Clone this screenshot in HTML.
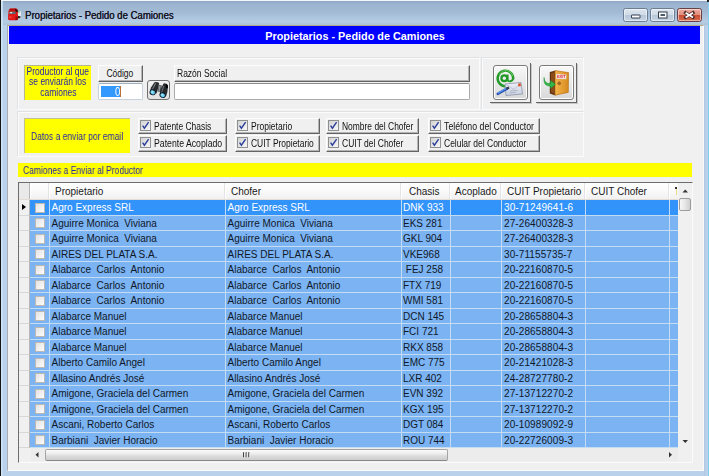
<!DOCTYPE html><html><head><meta charset="utf-8"><style>
*{margin:0;padding:0;box-sizing:border-box}
html,body{width:709px;height:476px;overflow:hidden;background:#b9d1ea;font-family:"Liberation Sans",sans-serif}
.a{position:absolute}
.t{white-space:pre;position:absolute;line-height:1}
#frame{left:0;top:0;width:709px;height:476px;background:#b9d1ea}
#tb{left:0;top:0;width:709px;height:25px;background:linear-gradient(#8fa7c6 1px,#9db4d0 4px,#a3bad5 12px,#b6cde6 22px,#b0c4d8 24px)}
#blk{left:0;top:0;width:1px;height:476px;background:#151515}
#top{left:0;top:0;width:709px;height:1px;background:#f4f6f8}
#client{left:7px;top:25px;width:697px;height:446px;background:#f0f0f0;border-left:1px solid #a7acb0;border-top:1px solid #aea688;border-right:1px solid #fafafa;border-bottom:1px solid #fafafa}
#bluebar{left:9px;top:26px;width:691px;height:18px;background:#0000fe}
.grp{border-top:1px solid #dfe3e6;border-left:1px solid #dfe3e6;box-shadow:inset 1px 1px 0 #fbfbfb, 1px 1px 0 #fbfbfb}
.yl{background:#ffff00;color:#2626a8}
.gs{will-change:transform}
.raised{background:#f0f0f0;border-top:1px solid #fdfdfd;border-left:1px solid #fdfdfd;border-right:1px solid #646464;border-bottom:1px solid #646464;box-shadow:inset -1px -1px 0 #b4b4b4}
.cb{width:11px;height:11px;border:1px solid #8f8f8f;background:linear-gradient(135deg,#dcdcdc,#f6f6f6)}
.cbi{width:11px;height:11px;border:1px solid #9a9a9a;background:linear-gradient(135deg,#d8d8d8,#f8f8f8)}
.lbl{font-size:10px;color:#1e1e1e}
.n{position:absolute;white-space:pre;line-height:1;font-size:10px;transform:scaleX(0.85);transform-origin:0 0}
.nc{position:absolute;white-space:pre;line-height:1;font-size:10px;text-align:center}
.nc span{display:inline-block;transform:scaleX(0.85);transform-origin:50% 0}
.g{font-size:10px}
.row{left:19px;width:659px;height:15.5px}
.cell{position:absolute;top:0;height:15px;font-size:10px;line-height:15px;white-space:pre;overflow:hidden;padding-left:3px}
</style></head><body>
<div id="frame" class="a"></div><div id="tb" class="a"></div><div id="top" class="a"></div><div id="blk" class="a"></div><div class="a" style="left:1px;top:1px;width:2px;height:475px;background:linear-gradient(90deg,#d2e6f8,#c2d9ef)"></div><div class="a" style="left:708px;top:2px;width:1px;height:474px;background:#86cdf0"></div><div class="a" style="left:707px;top:0;width:2px;height:2px;background:#202020"></div><div class="a" style="left:704px;top:25px;width:1px;height:451px;background:#b0c8e4"></div>
<svg class="a" style="left:6px;top:6px;overflow:visible" width="18" height="17" viewBox="6 6 18 17">
<path d="M17.3 10.2 L20.8 11.2 L21 18.8 L17.5 19.6 Z" fill="#eef2ee"/>
<path d="M17.5 10.3 L19.8 10.8 L19.6 13 L17.5 12.6Z" fill="#8ab89a"/>
<path d="M17.4 15.8 L20.6 16.2 L20.4 18.2 L17.6 18.4Z" fill="#2a2a2a"/>
<path d="M10 8.6 L16.2 8.4 Q17.8 8.8 17.8 10.5 L17.9 19.6 L16 20.3 L9.2 20.3 Q8.2 19.8 8.2 18.3 L8.4 12 Q8.6 9.4 10 8.6Z" fill="#d41414"/>
<path d="M10.2 8.7 L16 8.5 L17.4 10 L9.3 10.4Z" fill="#b00c0c"/>
<path d="M15 9 L17.6 10 L17.6 12 L15.5 11.5Z" fill="#2a0606"/>
<path d="M9.2 11.8 L15.6 11.5 L15.8 14 L9 14.2Z" fill="#5e6666"/>
<path d="M9.7 12.2 L12.4 12.1 L12.2 13.2 L9.7 13.3Z" fill="#e4ecec"/>
<path d="M8.4 14.6 L17.6 14.3 L17.8 19.6 L8.4 19.8Z" fill="#e41a1a"/>
<path d="M15.4 16.5 L17.8 16.5 L17.8 20 L15.6 20.2Z" fill="#9a0a0a"/>
<path d="M9.2 17.2 L11.5 17" stroke="#ff7070" stroke-width="0.8"/>
</svg>
<div class="t" style="left:25px;top:10.5px;font-size:10.2px;color:#151525;transform:scaleX(0.94);transform-origin:0 0;text-shadow:0.3px 0 0 currentColor">Propietarios - Pedido de Camiones</div>
<div class="a" style="left:623px;top:8px;width:25px;height:14px;border:1px solid #6e7e92;border-radius:2.5px;background:linear-gradient(#dde6ef 0%,#cfdbe7 48%,#b7c7d8 52%,#c5d5e5 100%);box-shadow:inset 0 0 0 1px rgba(255,255,255,0.5)"></div><svg class="a" style="left:628px;top:11px;overflow:visible" width="16" height="10" viewBox="628 11 16 10">
<rect x="631.5" y="15" width="8.5" height="3" rx="0.3" fill="#fff" stroke="#2f3a4a" stroke-width="1"/></svg>
<div class="a" style="left:650px;top:8px;width:25px;height:14px;border:1px solid #6e7e92;border-radius:2.5px;background:linear-gradient(#dde6ef 0%,#cfdbe7 48%,#b7c7d8 52%,#c5d5e5 100%);box-shadow:inset 0 0 0 1px rgba(255,255,255,0.5)"></div><svg class="a" style="left:655px;top:10px;overflow:visible" width="16" height="10" viewBox="655 10 16 10">
<rect x="658.5" y="12" width="8.5" height="6" fill="#fff" stroke="#2f3a4a" stroke-width="1"/>
<rect x="660.5" y="14" width="4.5" height="2" fill="#4a5a6a"/></svg>
<div class="a" style="left:677px;top:8px;width:25px;height:14px;border:1px solid #6a4048;border-radius:2.5px;background:linear-gradient(#eeaa9c 0%,#e1907e 48%,#c84f36 52%,#d66a4c 100%);box-shadow:inset 0 0 0 1px rgba(255,255,255,0.5)"></div><svg class="a" style="left:682px;top:10px;overflow:visible" width="16" height="10" viewBox="682 10 16 10">
<path d="M685.6 12.8 L693 17.4 M693 12.8 L685.6 17.4" stroke="#4a2a28" stroke-width="3.2" stroke-linecap="square"/>
<path d="M685.6 12.8 L693 17.4 M693 12.8 L685.6 17.4" stroke="#fff" stroke-width="1.8" stroke-linecap="butt"/></svg>
<div id="client" class="a"></div>
<div id="bluebar" class="a"></div>
<div class="t" style="left:0;top:31px;width:709px;text-align:center;font-size:10.85px;font-weight:bold;color:#fff;padding-left:1px">Propietarios - Pedido de Camiones</div>
<div class="a grp" style="left:17px;top:57px;width:462px;height:52px"></div>
<div class="a grp" style="left:481px;top:57px;width:102px;height:52px"></div>
<div class="a grp" style="left:17px;top:111px;width:566px;height:45px"></div>
<div class="a yl" style="left:24px;top:65px;width:67px;height:35px;border-top:1px solid #b8b890;border-left:1px solid #b8b890"></div>
<div class="nc gs" style="left:8px;top:66.8px;width:100px;color:#2626a8"><span>Productor al que</span></div>
<div class="nc gs" style="left:8px;top:77.39999999999999px;width:100px;color:#2626a8"><span>se enviarán los</span></div>
<div class="nc gs" style="left:8px;top:88.0px;width:100px;color:#2626a8"><span>camiones</span></div>
<div class="a raised" style="left:98px;top:65px;width:45px;height:17px;border-bottom-width:1px"></div>
<div class="nc" style="left:98px;top:69px;width:44px;color:#111"><span>Código</span></div>
<div class="a" style="left:98px;top:83px;width:45px;height:17px;background:#fff;border:1px solid #c5d2de;border-top-color:#9fb0c0;border-radius:2px"></div>
<div class="a" style="left:101px;top:86px;width:20px;height:11px;background:#3399ff"></div>
<div class="t" style="left:114.5px;top:85.5px;font-size:12px;color:#fff;transform:scaleX(0.8);transform-origin:0 0">0</div>
<div class="a" style="left:120px;top:86px;width:1px;height:11px;background:#c07030"></div>
<div class="a" style="left:147px;top:80px;width:23px;height:20px;border:1px solid #707070;border-radius:3px;background:linear-gradient(#f2f2f2,#e2e2e2)"></div>
<svg class="a" style="left:147px;top:80px;overflow:visible" width="24" height="20" viewBox="147 80 24 20">
<path d="M154.5 82.2 Q157 81.5 159.2 83 L157.8 89.5 L156.5 93.5 L149.8 91.5 L151 87.5Z" fill="#262a2d"/>
<path d="M155 83.3 L156.3 83.2 L152.4 90.2 L151.6 90Z" fill="#80878b"/>
<path d="M158.6 84.8 L162 85.5 L161 92 L157.5 91.5Z" fill="#555a5e"/>
<path d="M159.2 86 L160.6 86 L159.6 91 L158.6 91Z" fill="#9aa0a4"/>
<path d="M163.6 83.4 Q166.5 83 168 85.2 L167.4 92 L166 96.5 L159.5 94.5 L160.5 89.5Z" fill="#262a2d"/>
<path d="M166 84 L168 85.5 L167.8 88.5 L165.6 87.5Z" fill="#000"/>
<path d="M163.3 86 L164.4 86 L161.8 93 L161 92.8Z" fill="#6d7478"/>
<ellipse cx="152.7" cy="92.3" rx="3.2" ry="2.9" fill="#101c28" transform="rotate(20 152.7 92.3)"/>
<ellipse cx="152.7" cy="92.4" rx="2.3" ry="1.9" fill="#6ad0f2" transform="rotate(20 152.7 92.4)"/>
<ellipse cx="152.1" cy="92" rx="0.9" ry="0.7" fill="#c0f0ff"/>
<ellipse cx="162.7" cy="95.1" rx="3.2" ry="2.8" fill="#101c28" transform="rotate(20 162.7 95.1)"/>
<ellipse cx="162.7" cy="95.2" rx="2.3" ry="1.8" fill="#6ad0f2" transform="rotate(20 162.7 95.2)"/>
<ellipse cx="162.1" cy="94.8" rx="0.9" ry="0.7" fill="#c0f0ff"/>
</svg>
<div class="a raised" style="left:174px;top:65px;width:296px;height:17px;border-bottom-width:1px"></div>
<div class="n" style="left:177px;top:69px;color:#111">Razón Social</div>
<div class="a" style="left:174px;top:83px;width:296px;height:17px;background:#fff;border:1px solid #ababab;border-top-color:#8d8d8d;border-radius:2px"></div>
<div class="a" style="left:490px;top:63px;width:41px;height:40px;border-right:1px solid #646464;border-bottom:1px solid #646464;box-shadow:1px 1px 0 #c8c8c8"></div>
<div class="a" style="left:493px;top:65px;width:35px;height:35px;border:1px solid #7a7a7a;border-radius:3px;background:linear-gradient(#f8f8f8,#e6e6e6 60%,#d8d8d8);box-shadow:inset 0 0 0 1px #fff"></div>
<div class="a" style="left:536px;top:63px;width:41px;height:40px;border-right:1px solid #646464;border-bottom:1px solid #646464;box-shadow:1px 1px 0 #c8c8c8"></div>
<div class="a" style="left:539px;top:65px;width:35px;height:35px;border:1px solid #7a7a7a;border-radius:3px;background:linear-gradient(#f8f8f8,#e6e6e6 60%,#d8d8d8);box-shadow:inset 0 0 0 1px #fff"></div>
<svg class="a" style="left:493px;top:66px;overflow:visible" width="34" height="34" viewBox="493 66 34 34">
<defs><linearGradient id="env" x1="0" y1="0" x2="0" y2="1"><stop offset="0" stop-color="#eef0f8"/><stop offset="1" stop-color="#c8cede"/></linearGradient>
<linearGradient id="grn" x1="0" y1="0" x2="1" y2="1"><stop offset="0" stop-color="#7ad86a"/><stop offset="0.5" stop-color="#2aa02a"/><stop offset="1" stop-color="#107a18"/></linearGradient>
<linearGradient id="door" x1="0" y1="0" x2="1" y2="0"><stop offset="0" stop-color="#f4b64a"/><stop offset="1" stop-color="#d88a1e"/></linearGradient></defs>
<path d="M513.2 79.2 A7.8 7.8 0 1 0 510.2 84.6" fill="none" stroke="#239a28" stroke-width="2.4"/>
<path d="M512.6 76 A7 7 0 0 0 499.5 74.5" fill="none" stroke="#8ae07a" stroke-width="0.7"/>
<circle cx="504.3" cy="78.3" r="2.9" fill="none" stroke="#239a28" stroke-width="2.3"/>
<path d="M507.6 74.6 L507.6 79.6 Q508 81.6 510.2 81.3 Q512.8 80.8 513.2 78.5" fill="none" stroke="#239a28" stroke-width="1.9"/>
<path d="M505 84 L521 82.5 L522.5 94 L506 95.5Z" fill="url(#env)" stroke="#8c94ac" stroke-width="0.8"/>
<path d="M506 84.5 L514 89.5 L521 83" fill="none" stroke="#a8b0c4" stroke-width="0.6"/>
<path d="M510 91 L518 90.3 M509.5 92.8 L516 92.3" stroke="#9aa2b4" stroke-width="0.6"/>
<rect x="518.2" y="83.5" width="2.6" height="2.8" fill="#d8502a"/>
<path d="M497.8 93.8 L507 88.6" stroke="#2a4fb0" stroke-width="2.6" stroke-linecap="round"/>
<path d="M498.3 93 L506.5 88.2" stroke="#5a9cf0" stroke-width="1.2" stroke-linecap="round"/>
<path d="M506.5 88.7 L509 87.4" stroke="#303848" stroke-width="2.2"/>
</svg>
<svg class="a" style="left:540px;top:66px;overflow:visible" width="34" height="34" viewBox="540 66 34 34">
<path d="M549.8 72 L555.5 70.5 L555.5 95.5 L549.8 93.5Z" fill="#5e3210"/>
<path d="M551 73 L554.5 72.2 L554.5 93.5 L551 92.5Z" fill="#8a4c18"/>
<path d="M555 70.5 L568.6 72.6 L568.3 92.4 L555 95.2Z" fill="url(#door)" stroke="#b06a14" stroke-width="0.6"/>
<path d="M556 73.7 L566.6 74.6 L566.4 79.2 L556 79Z" fill="#f6f2ea" stroke="#c89040" stroke-width="0.4"/>
<text x="561.3" y="78.3" font-size="4.2" font-weight="bold" fill="#e0203a" text-anchor="middle" font-family="Liberation Sans" letter-spacing="-0.2">EXIT</text>
<circle cx="559.2" cy="83.3" r="1.5" fill="#a86a28" stroke="#7a4a18" stroke-width="0.4"/>
<path d="M544 77.5 Q544.5 84 550.5 83.5 L550.5 80.5 L555.5 84.2 L550.5 88.5 L550.5 86 Q543 86.5 544 77.5Z" fill="#30b848" stroke="#1a8a30" stroke-width="0.5"/>
</svg>
<div class="a yl" style="left:24px;top:118px;width:106px;height:35px;border-top:1px solid #c0c090;border-left:1px solid #c0c090"></div>
<div class="n gs" style="left:31px;top:131.5px;color:#2626a8">Datos a enviar por email</div>
<svg width="0" height="0" style="position:absolute"><defs><linearGradient id="cg" x1="0" y1="0" x2="1" y2="1"><stop offset="0" stop-color="#d0d0d0"/><stop offset="1" stop-color="#fafafa"/></linearGradient><linearGradient id="cg2" x1="0" y1="0" x2="1" y2="1"><stop offset="0" stop-color="#cfcfcf"/><stop offset="1" stop-color="#fbfbfb"/></linearGradient></defs></svg>
<div class="a raised" style="left:138px;top:118px;width:89px;height:16px"></div>
<svg class="a" style="left:140px;top:120px" width="11" height="11" viewBox="0 0 11 11"><rect x="0.5" y="0.5" width="10" height="10" fill="url(#cg)" stroke="#8e8f8f"/><path d="M2.6 5.6 L4.4 8.2 L8.6 2.2" fill="none" stroke="#2b3e9a" stroke-width="1.4"/></svg>
<div class="n" style="left:154px;top:121.5px;color:#111;transform:scaleX(0.845)">Patente Chasis</div>
<div class="a raised" style="left:138px;top:135px;width:89px;height:17px"></div>
<svg class="a" style="left:140px;top:137px" width="11" height="11" viewBox="0 0 11 11"><rect x="0.5" y="0.5" width="10" height="10" fill="url(#cg)" stroke="#8e8f8f"/><path d="M2.6 5.6 L4.4 8.2 L8.6 2.2" fill="none" stroke="#2b3e9a" stroke-width="1.4"/></svg>
<div class="n" style="left:154px;top:138.5px;color:#111;transform:scaleX(0.87)">Patente Acoplado</div>
<div class="a raised" style="left:235px;top:118px;width:85px;height:16px"></div>
<svg class="a" style="left:237px;top:120px" width="11" height="11" viewBox="0 0 11 11"><rect x="0.5" y="0.5" width="10" height="10" fill="url(#cg)" stroke="#8e8f8f"/><path d="M2.6 5.6 L4.4 8.2 L8.6 2.2" fill="none" stroke="#2b3e9a" stroke-width="1.4"/></svg>
<div class="n" style="left:251px;top:121.5px;color:#111;transform:scaleX(0.85)">Propietario</div>
<div class="a raised" style="left:235px;top:135px;width:85px;height:17px"></div>
<svg class="a" style="left:237px;top:137px" width="11" height="11" viewBox="0 0 11 11"><rect x="0.5" y="0.5" width="10" height="10" fill="url(#cg)" stroke="#8e8f8f"/><path d="M2.6 5.6 L4.4 8.2 L8.6 2.2" fill="none" stroke="#2b3e9a" stroke-width="1.4"/></svg>
<div class="n" style="left:251px;top:138.5px;color:#111;transform:scaleX(0.845)">CUIT Propietario</div>
<div class="a raised" style="left:326px;top:118px;width:93px;height:16px"></div>
<svg class="a" style="left:328px;top:120px" width="11" height="11" viewBox="0 0 11 11"><rect x="0.5" y="0.5" width="10" height="10" fill="url(#cg)" stroke="#8e8f8f"/><path d="M2.6 5.6 L4.4 8.2 L8.6 2.2" fill="none" stroke="#2b3e9a" stroke-width="1.4"/></svg>
<div class="n" style="left:342px;top:121.5px;color:#111;transform:scaleX(0.845)">Nombre del Chofer</div>
<div class="a raised" style="left:326px;top:135px;width:93px;height:17px"></div>
<svg class="a" style="left:328px;top:137px" width="11" height="11" viewBox="0 0 11 11"><rect x="0.5" y="0.5" width="10" height="10" fill="url(#cg)" stroke="#8e8f8f"/><path d="M2.6 5.6 L4.4 8.2 L8.6 2.2" fill="none" stroke="#2b3e9a" stroke-width="1.4"/></svg>
<div class="n" style="left:342px;top:138.5px;color:#111;transform:scaleX(0.85)">CUIT del Chofer</div>
<div class="a raised" style="left:428px;top:118px;width:112px;height:16px"></div>
<svg class="a" style="left:430px;top:120px" width="11" height="11" viewBox="0 0 11 11"><rect x="0.5" y="0.5" width="10" height="10" fill="url(#cg)" stroke="#8e8f8f"/><path d="M2.6 5.6 L4.4 8.2 L8.6 2.2" fill="none" stroke="#2b3e9a" stroke-width="1.4"/></svg>
<div class="n" style="left:444px;top:121.5px;color:#111;transform:scaleX(0.875)">Teléfono del Conductor</div>
<div class="a raised" style="left:428px;top:135px;width:112px;height:17px"></div>
<svg class="a" style="left:430px;top:137px" width="11" height="11" viewBox="0 0 11 11"><rect x="0.5" y="0.5" width="10" height="10" fill="url(#cg)" stroke="#8e8f8f"/><path d="M2.6 5.6 L4.4 8.2 L8.6 2.2" fill="none" stroke="#2b3e9a" stroke-width="1.4"/></svg>
<div class="n" style="left:444px;top:138.5px;color:#111;transform:scaleX(0.85)">Celular del Conductor</div>
<div class="a yl" style="left:18px;top:163px;width:674px;height:14px"></div>
<div class="n gs" style="left:23px;top:166px;color:#2626a8">Camiones a Enviar al Productor</div>
<div class="a" style="left:18px;top:182px;width:675px;height:281px;background:#f0f0f0;border-left:1px solid #6d6d6d;border-top:1px solid #6d6d6d;border-right:1px solid #fbfbfb;border-bottom:1px solid #fbfbfb"></div>
<div class="a" style="left:19px;top:183px;width:659px;height:17px;background:linear-gradient(#ffffff 0%,#fbfbfb 40%,#f1f1f1 100%);border-bottom:1px solid #e3dcd5"></div>
<div class="a" style="left:19px;top:183px;width:11px;height:16px;background:#e9e9e9"></div>
<div class="a" style="left:29px;top:183px;width:1px;height:16px;background:#b4b4b4"></div>
<div class="a" style="left:30px;top:183px;width:1px;height:16px;background:#ffffff"></div>
<div class="a" style="left:48px;top:183px;width:1px;height:16px;background:#e4e4e4"></div>
<div class="a" style="left:49px;top:183px;width:1px;height:16px;background:#ffffff"></div>
<div class="a" style="left:224px;top:183px;width:1px;height:16px;background:#e4e4e4"></div>
<div class="a" style="left:225px;top:183px;width:1px;height:16px;background:#ffffff"></div>
<div class="a" style="left:400px;top:183px;width:1px;height:16px;background:#e4e4e4"></div>
<div class="a" style="left:401px;top:183px;width:1px;height:16px;background:#ffffff"></div>
<div class="a" style="left:449px;top:183px;width:1px;height:16px;background:#e4e4e4"></div>
<div class="a" style="left:450px;top:183px;width:1px;height:16px;background:#ffffff"></div>
<div class="a" style="left:500px;top:183px;width:1px;height:16px;background:#e4e4e4"></div>
<div class="a" style="left:501px;top:183px;width:1px;height:16px;background:#ffffff"></div>
<div class="a" style="left:584px;top:183px;width:1px;height:16px;background:#e4e4e4"></div>
<div class="a" style="left:585px;top:183px;width:1px;height:16px;background:#ffffff"></div>
<div class="a" style="left:668px;top:183px;width:1px;height:16px;background:#e4e4e4"></div>
<div class="a" style="left:669px;top:183px;width:1px;height:16px;background:#ffffff"></div>
<div class="t" style="left:55px;top:187px;font-size:10px;color:#1a1a1a">Propietario</div>
<div class="t" style="left:231px;top:187px;font-size:10px;color:#1a1a1a">Chofer</div>
<div class="t" style="left:409px;top:187px;font-size:10px;color:#1a1a1a">Chasis</div>
<div class="t" style="left:455px;top:187px;font-size:10px;color:#1a1a1a">Acoplado</div>
<div class="t" style="left:507px;top:187px;font-size:10px;color:#1a1a1a">CUIT Propietario</div>
<div class="t" style="left:591px;top:187px;font-size:10px;color:#1a1a1a">CUIT Chofer</div>
<div class="a" style="left:675px;top:187px;width:2px;height:2px;background:#333"></div><div class="a" style="left:676px;top:189px;width:1px;height:6px;background:#e8d890"></div>
<div class="a" style="left:19px;top:200.0px;width:11px;height:15.5px;background:#f0f0f0;border-bottom:1px solid #d8d8d8"></div>
<div class="a" style="left:30px;top:200.0px;width:648px;height:15.5px;background:#3293fb;border-bottom:1px solid #c3dcf2"></div>
<svg class="a" style="left:22px;top:204.0px" width="5" height="7" viewBox="0 0 5 7"><path d="M0 0 L4 3 L0 6Z" fill="#000"/></svg>
<div class="a" style="left:35px;top:202.5px;width:10px;height:10px;border:1px solid #bdb8b2;background:linear-gradient(135deg,#e2e2e2,#fcfcfc)"></div>
<div class="a" style="left:49px;top:200.0px;width:1px;height:15.5px;background:#c3dcf2"></div>
<div class="a" style="left:225px;top:200.0px;width:1px;height:15.5px;background:#c3dcf2"></div>
<div class="a" style="left:401px;top:200.0px;width:1px;height:15.5px;background:#c3dcf2"></div>
<div class="a" style="left:450px;top:200.0px;width:1px;height:15.5px;background:#c3dcf2"></div>
<div class="a" style="left:501px;top:200.0px;width:1px;height:15.5px;background:#c3dcf2"></div>
<div class="a" style="left:585px;top:200.0px;width:1px;height:15.5px;background:#c3dcf2"></div>
<div class="a" style="left:669px;top:200.0px;width:1px;height:15.5px;background:#c3dcf2"></div>
<div class="a" style="left:29px;top:200.0px;width:1px;height:15.5px;background:#b8b8b8"></div>
<div class="t g" style="left:51.5px;top:203.4px;color:#ffffff">Agro Express SRL</div>
<div class="t g" style="left:227.5px;top:203.4px;color:#ffffff">Agro Express SRL</div>
<div class="t g" style="left:403px;top:203.4px;color:#ffffff">DNK 933</div>
<div class="t g" style="left:504px;top:203.4px;color:#ffffff;letter-spacing:0.1px">30-71249641-6</div>
<div class="a" style="left:19px;top:215.5px;width:11px;height:15.5px;background:#f0f0f0;border-bottom:1px solid #d8d8d8"></div>
<div class="a" style="left:30px;top:215.5px;width:648px;height:15.5px;background:#7bb3f3;border-bottom:1px solid #c3dcf2"></div>
<div class="a" style="left:35px;top:218.0px;width:10px;height:10px;border:1px solid #bdb8b2;background:linear-gradient(135deg,#e2e2e2,#fcfcfc)"></div>
<div class="a" style="left:49px;top:215.5px;width:1px;height:15.5px;background:#c3dcf2"></div>
<div class="a" style="left:225px;top:215.5px;width:1px;height:15.5px;background:#c3dcf2"></div>
<div class="a" style="left:401px;top:215.5px;width:1px;height:15.5px;background:#c3dcf2"></div>
<div class="a" style="left:450px;top:215.5px;width:1px;height:15.5px;background:#c3dcf2"></div>
<div class="a" style="left:501px;top:215.5px;width:1px;height:15.5px;background:#c3dcf2"></div>
<div class="a" style="left:585px;top:215.5px;width:1px;height:15.5px;background:#c3dcf2"></div>
<div class="a" style="left:669px;top:215.5px;width:1px;height:15.5px;background:#c3dcf2"></div>
<div class="a" style="left:29px;top:215.5px;width:1px;height:15.5px;background:#b8b8b8"></div>
<div class="t g" style="left:51.5px;top:218.9px;color:#101828">Aguirre Monica  Viviana</div>
<div class="t g" style="left:227.5px;top:218.9px;color:#101828">Aguirre Monica  Viviana</div>
<div class="t g" style="left:403px;top:218.9px;color:#101828">EKS 281</div>
<div class="t g" style="left:504px;top:218.9px;color:#101828;letter-spacing:0.1px">27-26400328-3</div>
<div class="a" style="left:19px;top:231.0px;width:11px;height:15.5px;background:#f0f0f0;border-bottom:1px solid #d8d8d8"></div>
<div class="a" style="left:30px;top:231.0px;width:648px;height:15.5px;background:#7bb3f3;border-bottom:1px solid #c3dcf2"></div>
<div class="a" style="left:35px;top:233.5px;width:10px;height:10px;border:1px solid #bdb8b2;background:linear-gradient(135deg,#e2e2e2,#fcfcfc)"></div>
<div class="a" style="left:49px;top:231.0px;width:1px;height:15.5px;background:#c3dcf2"></div>
<div class="a" style="left:225px;top:231.0px;width:1px;height:15.5px;background:#c3dcf2"></div>
<div class="a" style="left:401px;top:231.0px;width:1px;height:15.5px;background:#c3dcf2"></div>
<div class="a" style="left:450px;top:231.0px;width:1px;height:15.5px;background:#c3dcf2"></div>
<div class="a" style="left:501px;top:231.0px;width:1px;height:15.5px;background:#c3dcf2"></div>
<div class="a" style="left:585px;top:231.0px;width:1px;height:15.5px;background:#c3dcf2"></div>
<div class="a" style="left:669px;top:231.0px;width:1px;height:15.5px;background:#c3dcf2"></div>
<div class="a" style="left:29px;top:231.0px;width:1px;height:15.5px;background:#b8b8b8"></div>
<div class="t g" style="left:51.5px;top:234.4px;color:#101828">Aguirre Monica  Viviana</div>
<div class="t g" style="left:227.5px;top:234.4px;color:#101828">Aguirre Monica  Viviana</div>
<div class="t g" style="left:403px;top:234.4px;color:#101828">GKL 904</div>
<div class="t g" style="left:504px;top:234.4px;color:#101828;letter-spacing:0.1px">27-26400328-3</div>
<div class="a" style="left:19px;top:246.5px;width:11px;height:15.5px;background:#f0f0f0;border-bottom:1px solid #d8d8d8"></div>
<div class="a" style="left:30px;top:246.5px;width:648px;height:15.5px;background:#7bb3f3;border-bottom:1px solid #c3dcf2"></div>
<div class="a" style="left:35px;top:249.0px;width:10px;height:10px;border:1px solid #bdb8b2;background:linear-gradient(135deg,#e2e2e2,#fcfcfc)"></div>
<div class="a" style="left:49px;top:246.5px;width:1px;height:15.5px;background:#c3dcf2"></div>
<div class="a" style="left:225px;top:246.5px;width:1px;height:15.5px;background:#c3dcf2"></div>
<div class="a" style="left:401px;top:246.5px;width:1px;height:15.5px;background:#c3dcf2"></div>
<div class="a" style="left:450px;top:246.5px;width:1px;height:15.5px;background:#c3dcf2"></div>
<div class="a" style="left:501px;top:246.5px;width:1px;height:15.5px;background:#c3dcf2"></div>
<div class="a" style="left:585px;top:246.5px;width:1px;height:15.5px;background:#c3dcf2"></div>
<div class="a" style="left:669px;top:246.5px;width:1px;height:15.5px;background:#c3dcf2"></div>
<div class="a" style="left:29px;top:246.5px;width:1px;height:15.5px;background:#b8b8b8"></div>
<div class="t g" style="left:51.5px;top:249.9px;color:#101828">AIRES DEL PLATA S.A.</div>
<div class="t g" style="left:227.5px;top:249.9px;color:#101828">AIRES DEL PLATA S.A.</div>
<div class="t g" style="left:403px;top:249.9px;color:#101828">VKE968</div>
<div class="t g" style="left:504px;top:249.9px;color:#101828;letter-spacing:0.1px">30-71155735-7</div>
<div class="a" style="left:19px;top:262.0px;width:11px;height:15.5px;background:#f0f0f0;border-bottom:1px solid #d8d8d8"></div>
<div class="a" style="left:30px;top:262.0px;width:648px;height:15.5px;background:#7bb3f3;border-bottom:1px solid #c3dcf2"></div>
<div class="a" style="left:35px;top:264.5px;width:10px;height:10px;border:1px solid #bdb8b2;background:linear-gradient(135deg,#e2e2e2,#fcfcfc)"></div>
<div class="a" style="left:49px;top:262.0px;width:1px;height:15.5px;background:#c3dcf2"></div>
<div class="a" style="left:225px;top:262.0px;width:1px;height:15.5px;background:#c3dcf2"></div>
<div class="a" style="left:401px;top:262.0px;width:1px;height:15.5px;background:#c3dcf2"></div>
<div class="a" style="left:450px;top:262.0px;width:1px;height:15.5px;background:#c3dcf2"></div>
<div class="a" style="left:501px;top:262.0px;width:1px;height:15.5px;background:#c3dcf2"></div>
<div class="a" style="left:585px;top:262.0px;width:1px;height:15.5px;background:#c3dcf2"></div>
<div class="a" style="left:669px;top:262.0px;width:1px;height:15.5px;background:#c3dcf2"></div>
<div class="a" style="left:29px;top:262.0px;width:1px;height:15.5px;background:#b8b8b8"></div>
<div class="t g" style="left:51.5px;top:265.4px;color:#101828">Alabarce  Carlos  Antonio</div>
<div class="t g" style="left:227.5px;top:265.4px;color:#101828">Alabarce  Carlos  Antonio</div>
<div class="t g" style="left:403px;top:265.4px;color:#101828"> FEJ 258</div>
<div class="t g" style="left:504px;top:265.4px;color:#101828;letter-spacing:0.1px">20-22160870-5</div>
<div class="a" style="left:19px;top:277.5px;width:11px;height:15.5px;background:#f0f0f0;border-bottom:1px solid #d8d8d8"></div>
<div class="a" style="left:30px;top:277.5px;width:648px;height:15.5px;background:#7bb3f3;border-bottom:1px solid #c3dcf2"></div>
<div class="a" style="left:35px;top:280.0px;width:10px;height:10px;border:1px solid #bdb8b2;background:linear-gradient(135deg,#e2e2e2,#fcfcfc)"></div>
<div class="a" style="left:49px;top:277.5px;width:1px;height:15.5px;background:#c3dcf2"></div>
<div class="a" style="left:225px;top:277.5px;width:1px;height:15.5px;background:#c3dcf2"></div>
<div class="a" style="left:401px;top:277.5px;width:1px;height:15.5px;background:#c3dcf2"></div>
<div class="a" style="left:450px;top:277.5px;width:1px;height:15.5px;background:#c3dcf2"></div>
<div class="a" style="left:501px;top:277.5px;width:1px;height:15.5px;background:#c3dcf2"></div>
<div class="a" style="left:585px;top:277.5px;width:1px;height:15.5px;background:#c3dcf2"></div>
<div class="a" style="left:669px;top:277.5px;width:1px;height:15.5px;background:#c3dcf2"></div>
<div class="a" style="left:29px;top:277.5px;width:1px;height:15.5px;background:#b8b8b8"></div>
<div class="t g" style="left:51.5px;top:280.9px;color:#101828">Alabarce  Carlos  Antonio</div>
<div class="t g" style="left:227.5px;top:280.9px;color:#101828">Alabarce  Carlos  Antonio</div>
<div class="t g" style="left:403px;top:280.9px;color:#101828">FTX 719</div>
<div class="t g" style="left:504px;top:280.9px;color:#101828;letter-spacing:0.1px">20-22160870-5</div>
<div class="a" style="left:19px;top:293.0px;width:11px;height:15.5px;background:#f0f0f0;border-bottom:1px solid #d8d8d8"></div>
<div class="a" style="left:30px;top:293.0px;width:648px;height:15.5px;background:#7bb3f3;border-bottom:1px solid #c3dcf2"></div>
<div class="a" style="left:35px;top:295.5px;width:10px;height:10px;border:1px solid #bdb8b2;background:linear-gradient(135deg,#e2e2e2,#fcfcfc)"></div>
<div class="a" style="left:49px;top:293.0px;width:1px;height:15.5px;background:#c3dcf2"></div>
<div class="a" style="left:225px;top:293.0px;width:1px;height:15.5px;background:#c3dcf2"></div>
<div class="a" style="left:401px;top:293.0px;width:1px;height:15.5px;background:#c3dcf2"></div>
<div class="a" style="left:450px;top:293.0px;width:1px;height:15.5px;background:#c3dcf2"></div>
<div class="a" style="left:501px;top:293.0px;width:1px;height:15.5px;background:#c3dcf2"></div>
<div class="a" style="left:585px;top:293.0px;width:1px;height:15.5px;background:#c3dcf2"></div>
<div class="a" style="left:669px;top:293.0px;width:1px;height:15.5px;background:#c3dcf2"></div>
<div class="a" style="left:29px;top:293.0px;width:1px;height:15.5px;background:#b8b8b8"></div>
<div class="t g" style="left:51.5px;top:296.4px;color:#101828">Alabarce  Carlos  Antonio</div>
<div class="t g" style="left:227.5px;top:296.4px;color:#101828">Alabarce  Carlos  Antonio</div>
<div class="t g" style="left:403px;top:296.4px;color:#101828">WMI 581</div>
<div class="t g" style="left:504px;top:296.4px;color:#101828;letter-spacing:0.1px">20-22160870-5</div>
<div class="a" style="left:19px;top:308.5px;width:11px;height:15.5px;background:#f0f0f0;border-bottom:1px solid #d8d8d8"></div>
<div class="a" style="left:30px;top:308.5px;width:648px;height:15.5px;background:#7bb3f3;border-bottom:1px solid #c3dcf2"></div>
<div class="a" style="left:35px;top:311.0px;width:10px;height:10px;border:1px solid #bdb8b2;background:linear-gradient(135deg,#e2e2e2,#fcfcfc)"></div>
<div class="a" style="left:49px;top:308.5px;width:1px;height:15.5px;background:#c3dcf2"></div>
<div class="a" style="left:225px;top:308.5px;width:1px;height:15.5px;background:#c3dcf2"></div>
<div class="a" style="left:401px;top:308.5px;width:1px;height:15.5px;background:#c3dcf2"></div>
<div class="a" style="left:450px;top:308.5px;width:1px;height:15.5px;background:#c3dcf2"></div>
<div class="a" style="left:501px;top:308.5px;width:1px;height:15.5px;background:#c3dcf2"></div>
<div class="a" style="left:585px;top:308.5px;width:1px;height:15.5px;background:#c3dcf2"></div>
<div class="a" style="left:669px;top:308.5px;width:1px;height:15.5px;background:#c3dcf2"></div>
<div class="a" style="left:29px;top:308.5px;width:1px;height:15.5px;background:#b8b8b8"></div>
<div class="t g" style="left:51.5px;top:311.9px;color:#101828">Alabarce Manuel</div>
<div class="t g" style="left:227.5px;top:311.9px;color:#101828">Alabarce Manuel</div>
<div class="t g" style="left:403px;top:311.9px;color:#101828">DCN 145</div>
<div class="t g" style="left:504px;top:311.9px;color:#101828;letter-spacing:0.1px">20-28658804-3</div>
<div class="a" style="left:19px;top:324.0px;width:11px;height:15.5px;background:#f0f0f0;border-bottom:1px solid #d8d8d8"></div>
<div class="a" style="left:30px;top:324.0px;width:648px;height:15.5px;background:#7bb3f3;border-bottom:1px solid #c3dcf2"></div>
<div class="a" style="left:35px;top:326.5px;width:10px;height:10px;border:1px solid #bdb8b2;background:linear-gradient(135deg,#e2e2e2,#fcfcfc)"></div>
<div class="a" style="left:49px;top:324.0px;width:1px;height:15.5px;background:#c3dcf2"></div>
<div class="a" style="left:225px;top:324.0px;width:1px;height:15.5px;background:#c3dcf2"></div>
<div class="a" style="left:401px;top:324.0px;width:1px;height:15.5px;background:#c3dcf2"></div>
<div class="a" style="left:450px;top:324.0px;width:1px;height:15.5px;background:#c3dcf2"></div>
<div class="a" style="left:501px;top:324.0px;width:1px;height:15.5px;background:#c3dcf2"></div>
<div class="a" style="left:585px;top:324.0px;width:1px;height:15.5px;background:#c3dcf2"></div>
<div class="a" style="left:669px;top:324.0px;width:1px;height:15.5px;background:#c3dcf2"></div>
<div class="a" style="left:29px;top:324.0px;width:1px;height:15.5px;background:#b8b8b8"></div>
<div class="t g" style="left:51.5px;top:327.4px;color:#101828">Alabarce Manuel</div>
<div class="t g" style="left:227.5px;top:327.4px;color:#101828">Alabarce Manuel</div>
<div class="t g" style="left:403px;top:327.4px;color:#101828">FCI 721</div>
<div class="t g" style="left:504px;top:327.4px;color:#101828;letter-spacing:0.1px">20-28658804-3</div>
<div class="a" style="left:19px;top:339.5px;width:11px;height:15.5px;background:#f0f0f0;border-bottom:1px solid #d8d8d8"></div>
<div class="a" style="left:30px;top:339.5px;width:648px;height:15.5px;background:#7bb3f3;border-bottom:1px solid #c3dcf2"></div>
<div class="a" style="left:35px;top:342.0px;width:10px;height:10px;border:1px solid #bdb8b2;background:linear-gradient(135deg,#e2e2e2,#fcfcfc)"></div>
<div class="a" style="left:49px;top:339.5px;width:1px;height:15.5px;background:#c3dcf2"></div>
<div class="a" style="left:225px;top:339.5px;width:1px;height:15.5px;background:#c3dcf2"></div>
<div class="a" style="left:401px;top:339.5px;width:1px;height:15.5px;background:#c3dcf2"></div>
<div class="a" style="left:450px;top:339.5px;width:1px;height:15.5px;background:#c3dcf2"></div>
<div class="a" style="left:501px;top:339.5px;width:1px;height:15.5px;background:#c3dcf2"></div>
<div class="a" style="left:585px;top:339.5px;width:1px;height:15.5px;background:#c3dcf2"></div>
<div class="a" style="left:669px;top:339.5px;width:1px;height:15.5px;background:#c3dcf2"></div>
<div class="a" style="left:29px;top:339.5px;width:1px;height:15.5px;background:#b8b8b8"></div>
<div class="t g" style="left:51.5px;top:342.9px;color:#101828">Alabarce Manuel</div>
<div class="t g" style="left:227.5px;top:342.9px;color:#101828">Alabarce Manuel</div>
<div class="t g" style="left:403px;top:342.9px;color:#101828">RKX 858</div>
<div class="t g" style="left:504px;top:342.9px;color:#101828;letter-spacing:0.1px">20-28658804-3</div>
<div class="a" style="left:19px;top:355.0px;width:11px;height:15.5px;background:#f0f0f0;border-bottom:1px solid #d8d8d8"></div>
<div class="a" style="left:30px;top:355.0px;width:648px;height:15.5px;background:#7bb3f3;border-bottom:1px solid #c3dcf2"></div>
<div class="a" style="left:35px;top:357.5px;width:10px;height:10px;border:1px solid #bdb8b2;background:linear-gradient(135deg,#e2e2e2,#fcfcfc)"></div>
<div class="a" style="left:49px;top:355.0px;width:1px;height:15.5px;background:#c3dcf2"></div>
<div class="a" style="left:225px;top:355.0px;width:1px;height:15.5px;background:#c3dcf2"></div>
<div class="a" style="left:401px;top:355.0px;width:1px;height:15.5px;background:#c3dcf2"></div>
<div class="a" style="left:450px;top:355.0px;width:1px;height:15.5px;background:#c3dcf2"></div>
<div class="a" style="left:501px;top:355.0px;width:1px;height:15.5px;background:#c3dcf2"></div>
<div class="a" style="left:585px;top:355.0px;width:1px;height:15.5px;background:#c3dcf2"></div>
<div class="a" style="left:669px;top:355.0px;width:1px;height:15.5px;background:#c3dcf2"></div>
<div class="a" style="left:29px;top:355.0px;width:1px;height:15.5px;background:#b8b8b8"></div>
<div class="t g" style="left:51.5px;top:358.4px;color:#101828">Alberto Camilo Angel</div>
<div class="t g" style="left:227.5px;top:358.4px;color:#101828">Alberto Camilo Angel</div>
<div class="t g" style="left:403px;top:358.4px;color:#101828">EMC 775</div>
<div class="t g" style="left:504px;top:358.4px;color:#101828;letter-spacing:0.1px">20-21421028-3</div>
<div class="a" style="left:19px;top:370.5px;width:11px;height:15.5px;background:#f0f0f0;border-bottom:1px solid #d8d8d8"></div>
<div class="a" style="left:30px;top:370.5px;width:648px;height:15.5px;background:#7bb3f3;border-bottom:1px solid #c3dcf2"></div>
<div class="a" style="left:35px;top:373.0px;width:10px;height:10px;border:1px solid #bdb8b2;background:linear-gradient(135deg,#e2e2e2,#fcfcfc)"></div>
<div class="a" style="left:49px;top:370.5px;width:1px;height:15.5px;background:#c3dcf2"></div>
<div class="a" style="left:225px;top:370.5px;width:1px;height:15.5px;background:#c3dcf2"></div>
<div class="a" style="left:401px;top:370.5px;width:1px;height:15.5px;background:#c3dcf2"></div>
<div class="a" style="left:450px;top:370.5px;width:1px;height:15.5px;background:#c3dcf2"></div>
<div class="a" style="left:501px;top:370.5px;width:1px;height:15.5px;background:#c3dcf2"></div>
<div class="a" style="left:585px;top:370.5px;width:1px;height:15.5px;background:#c3dcf2"></div>
<div class="a" style="left:669px;top:370.5px;width:1px;height:15.5px;background:#c3dcf2"></div>
<div class="a" style="left:29px;top:370.5px;width:1px;height:15.5px;background:#b8b8b8"></div>
<div class="t g" style="left:51.5px;top:373.9px;color:#101828">Allasino Andrés José</div>
<div class="t g" style="left:227.5px;top:373.9px;color:#101828">Allasino Andrés José</div>
<div class="t g" style="left:403px;top:373.9px;color:#101828">LXR 402</div>
<div class="t g" style="left:504px;top:373.9px;color:#101828;letter-spacing:0.1px">24-28727780-2</div>
<div class="a" style="left:19px;top:386.0px;width:11px;height:15.5px;background:#f0f0f0;border-bottom:1px solid #d8d8d8"></div>
<div class="a" style="left:30px;top:386.0px;width:648px;height:15.5px;background:#7bb3f3;border-bottom:1px solid #c3dcf2"></div>
<div class="a" style="left:35px;top:388.5px;width:10px;height:10px;border:1px solid #bdb8b2;background:linear-gradient(135deg,#e2e2e2,#fcfcfc)"></div>
<div class="a" style="left:49px;top:386.0px;width:1px;height:15.5px;background:#c3dcf2"></div>
<div class="a" style="left:225px;top:386.0px;width:1px;height:15.5px;background:#c3dcf2"></div>
<div class="a" style="left:401px;top:386.0px;width:1px;height:15.5px;background:#c3dcf2"></div>
<div class="a" style="left:450px;top:386.0px;width:1px;height:15.5px;background:#c3dcf2"></div>
<div class="a" style="left:501px;top:386.0px;width:1px;height:15.5px;background:#c3dcf2"></div>
<div class="a" style="left:585px;top:386.0px;width:1px;height:15.5px;background:#c3dcf2"></div>
<div class="a" style="left:669px;top:386.0px;width:1px;height:15.5px;background:#c3dcf2"></div>
<div class="a" style="left:29px;top:386.0px;width:1px;height:15.5px;background:#b8b8b8"></div>
<div class="t g" style="left:51.5px;top:389.4px;color:#101828">Amigone, Graciela del Carmen</div>
<div class="t g" style="left:227.5px;top:389.4px;color:#101828">Amigone, Graciela del Carmen</div>
<div class="t g" style="left:403px;top:389.4px;color:#101828">EVN 392</div>
<div class="t g" style="left:504px;top:389.4px;color:#101828;letter-spacing:0.1px">27-13712270-2</div>
<div class="a" style="left:19px;top:401.5px;width:11px;height:15.5px;background:#f0f0f0;border-bottom:1px solid #d8d8d8"></div>
<div class="a" style="left:30px;top:401.5px;width:648px;height:15.5px;background:#7bb3f3;border-bottom:1px solid #c3dcf2"></div>
<div class="a" style="left:35px;top:404.0px;width:10px;height:10px;border:1px solid #bdb8b2;background:linear-gradient(135deg,#e2e2e2,#fcfcfc)"></div>
<div class="a" style="left:49px;top:401.5px;width:1px;height:15.5px;background:#c3dcf2"></div>
<div class="a" style="left:225px;top:401.5px;width:1px;height:15.5px;background:#c3dcf2"></div>
<div class="a" style="left:401px;top:401.5px;width:1px;height:15.5px;background:#c3dcf2"></div>
<div class="a" style="left:450px;top:401.5px;width:1px;height:15.5px;background:#c3dcf2"></div>
<div class="a" style="left:501px;top:401.5px;width:1px;height:15.5px;background:#c3dcf2"></div>
<div class="a" style="left:585px;top:401.5px;width:1px;height:15.5px;background:#c3dcf2"></div>
<div class="a" style="left:669px;top:401.5px;width:1px;height:15.5px;background:#c3dcf2"></div>
<div class="a" style="left:29px;top:401.5px;width:1px;height:15.5px;background:#b8b8b8"></div>
<div class="t g" style="left:51.5px;top:404.9px;color:#101828">Amigone, Graciela del Carmen</div>
<div class="t g" style="left:227.5px;top:404.9px;color:#101828">Amigone, Graciela del Carmen</div>
<div class="t g" style="left:403px;top:404.9px;color:#101828">KGX 195</div>
<div class="t g" style="left:504px;top:404.9px;color:#101828;letter-spacing:0.1px">27-13712270-2</div>
<div class="a" style="left:19px;top:417.0px;width:11px;height:15.5px;background:#f0f0f0;border-bottom:1px solid #d8d8d8"></div>
<div class="a" style="left:30px;top:417.0px;width:648px;height:15.5px;background:#7bb3f3;border-bottom:1px solid #c3dcf2"></div>
<div class="a" style="left:35px;top:419.5px;width:10px;height:10px;border:1px solid #bdb8b2;background:linear-gradient(135deg,#e2e2e2,#fcfcfc)"></div>
<div class="a" style="left:49px;top:417.0px;width:1px;height:15.5px;background:#c3dcf2"></div>
<div class="a" style="left:225px;top:417.0px;width:1px;height:15.5px;background:#c3dcf2"></div>
<div class="a" style="left:401px;top:417.0px;width:1px;height:15.5px;background:#c3dcf2"></div>
<div class="a" style="left:450px;top:417.0px;width:1px;height:15.5px;background:#c3dcf2"></div>
<div class="a" style="left:501px;top:417.0px;width:1px;height:15.5px;background:#c3dcf2"></div>
<div class="a" style="left:585px;top:417.0px;width:1px;height:15.5px;background:#c3dcf2"></div>
<div class="a" style="left:669px;top:417.0px;width:1px;height:15.5px;background:#c3dcf2"></div>
<div class="a" style="left:29px;top:417.0px;width:1px;height:15.5px;background:#b8b8b8"></div>
<div class="t g" style="left:51.5px;top:420.4px;color:#101828">Ascani, Roberto Carlos</div>
<div class="t g" style="left:227.5px;top:420.4px;color:#101828">Ascani, Roberto Carlos</div>
<div class="t g" style="left:403px;top:420.4px;color:#101828">DGT 084</div>
<div class="t g" style="left:504px;top:420.4px;color:#101828;letter-spacing:0.1px">20-10989092-9</div>
<div class="a" style="left:19px;top:432.5px;width:11px;height:15.5px;background:#f0f0f0;border-bottom:1px solid #d8d8d8"></div>
<div class="a" style="left:30px;top:432.5px;width:648px;height:15.5px;background:#7bb3f3;border-bottom:1px solid #c3dcf2"></div>
<div class="a" style="left:35px;top:435.0px;width:10px;height:10px;border:1px solid #bdb8b2;background:linear-gradient(135deg,#e2e2e2,#fcfcfc)"></div>
<div class="a" style="left:49px;top:432.5px;width:1px;height:15.5px;background:#c3dcf2"></div>
<div class="a" style="left:225px;top:432.5px;width:1px;height:15.5px;background:#c3dcf2"></div>
<div class="a" style="left:401px;top:432.5px;width:1px;height:15.5px;background:#c3dcf2"></div>
<div class="a" style="left:450px;top:432.5px;width:1px;height:15.5px;background:#c3dcf2"></div>
<div class="a" style="left:501px;top:432.5px;width:1px;height:15.5px;background:#c3dcf2"></div>
<div class="a" style="left:585px;top:432.5px;width:1px;height:15.5px;background:#c3dcf2"></div>
<div class="a" style="left:669px;top:432.5px;width:1px;height:15.5px;background:#c3dcf2"></div>
<div class="a" style="left:29px;top:432.5px;width:1px;height:15.5px;background:#b8b8b8"></div>
<div class="t g" style="left:51.5px;top:435.9px;color:#101828">Barbiani  Javier Horacio</div>
<div class="t g" style="left:227.5px;top:435.9px;color:#101828">Barbiani  Javier Horacio</div>
<div class="t g" style="left:403px;top:435.9px;color:#101828">ROU 744</div>
<div class="t g" style="left:504px;top:435.9px;color:#101828;letter-spacing:0.1px">20-22726009-3</div>
<div class="a" style="left:678px;top:183px;width:13px;height:265px;background:#f0f0f0"></div>
<svg class="a" style="left:682px;top:189px" width="8" height="5" viewBox="0 0 8 5"><path d="M0.5 3.5 L3.25 0.5 L6 3.5Z" fill="#333"/></svg>
<div class="a" style="left:679px;top:198px;width:12px;height:13px;border:1px solid #9c9c9c;border-radius:2px;background:linear-gradient(90deg,#f6f6f6,#e6e6e6 50%,#cfcfcf)"></div>
<svg class="a" style="left:682px;top:440px" width="7" height="4" viewBox="0 0 7 4"><path d="M0.5 0 L6 0 L3.25 3Z" fill="#333"/></svg>
<div class="a" style="left:31px;top:448px;width:647px;height:13px;background:#ececec"></div>
<svg class="a" style="left:35px;top:452px" width="4" height="7" viewBox="0 0 4 7"><path d="M3.5 0 L0.5 2.75 L3.5 5.5Z" fill="#333"/></svg>
<div class="a" style="left:45px;top:449px;width:403px;height:12px;border:1px solid #a4a4a4;border-bottom-color:#8a8a8a;border-radius:2px;background:linear-gradient(#fbfbfb,#ececec 40%,#dcdcdc 60%,#cdcdcd)"></div>
<svg class="a" style="left:240px;top:450px;overflow:visible" width="12" height="10" viewBox="240 450 12 10"><path d="M243.6 452.2 L243.6 457.2 M246.2 452.2 L246.2 457.2 M248.8 452.2 L248.8 457.2" stroke="#3a3a3a" stroke-width="1.1"/><path d="M244.5 453 L244.5 457.5 M247.1 453 L247.1 457.5 M249.7 453 L249.7 457.5" stroke="#fafafa" stroke-width="0.6"/></svg>
<svg class="a" style="left:669px;top:452px" width="4" height="7" viewBox="0 0 4 7"><path d="M0 0 L3 2.75 L0 5.5Z" fill="#333"/></svg>
</body></html>
